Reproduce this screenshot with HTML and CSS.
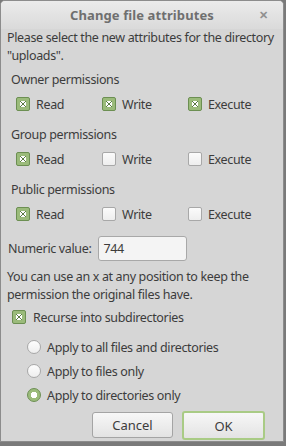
FILE: index.html
```html
<!DOCTYPE html>
<html lang="en">
<head>
    <meta charset="UTF-8">
    <title>Change file attributes</title>
    <link rel="stylesheet" href="styles.css">
</head>
<body>
    <div class="window">
        <div class="titlebar">
            <span class="title">Change file attributes</span>
            <span class="close">&#x2715;</span>
        </div>

        <div class="content">
            <p class="intro">Please select the new attributes for the directory "uploads".</p>

            <div class="group first">
                <div class="group-label">Owner permissions</div>
                <div class="perm-row">
                    <label class="check"><span class="box checked"></span>Read</label>
                    <label class="check"><span class="box checked"></span>Write</label>
                    <label class="check"><span class="box checked"></span>Execute</label>
                </div>
            </div>

            <div class="group">
                <div class="group-label">Group permissions</div>
                <div class="perm-row">
                    <label class="check"><span class="box checked"></span>Read</label>
                    <label class="check"><span class="box"></span>Write</label>
                    <label class="check"><span class="box"></span>Execute</label>
                </div>
            </div>

            <div class="group">
                <div class="group-label">Public permissions</div>
                <div class="perm-row">
                    <label class="check"><span class="box checked"></span>Read</label>
                    <label class="check"><span class="box"></span>Write</label>
                    <label class="check"><span class="box"></span>Execute</label>
                </div>
            </div>

            <div class="numeric">
                <span>Numeric value:</span>
                <span class="field">744</span>
            </div>

            <p class="hint">You can use an x at any position to keep the permission the original files have.</p>

            <label class="check recurse"><span class="box checked"></span>Recurse into subdirectories</label>

            <div class="radios">
                <label class="radio"><span class="dot"></span>Apply to all files and directories</label>
                <label class="radio"><span class="dot"></span>Apply to files only</label>
                <label class="radio"><span class="dot selected"></span>Apply to directories only</label>
            </div>

            <div class="buttons">
                <button class="btn">Cancel</button>
                <button class="btn default">OK</button>
            </div>
        </div>
    </div>
</body>
</html>
```

FILE: styles.css
```css
* {
    margin: 0;
    padding: 0;
    box-sizing: border-box;
}

body {
    width: 286px;
    height: 446px;
    background: #7a7a7a;
    font-family: 'Noto Sans', 'Open Sans', sans-serif;
    font-size: 12.5px;
    letter-spacing: -0.35px;
    color: #3c3c3c;
    overflow: hidden;
}

.window {
    width: 284px;
    height: 442px;
    background: #d6d6d6;
    border: 1px solid #8c8c8c;
    border-radius: 5px 5px 0 0;
    overflow: hidden;
}

.titlebar {
    height: 28px;
    background: linear-gradient(#ebebeb, #dadada);
    display: flex;
    align-items: center;
    justify-content: center;
    position: relative;
}

.title {
    font-weight: bold;
    color: #6f6f6f;
    font-size: 13px;
    letter-spacing: 0.1px;
}

.close {
    position: absolute;
    right: 15px;
    top: 6px;
    font-size: 11px;
    font-weight: bold;
    color: #909090;
}

.content {
    padding: 0 2px 0 6px;
}

.intro {
    line-height: 18px;
}

.group {
    margin-top: 12px;
}

.group.first {
    margin-top: 6px;
}

.group-label {
    padding-left: 4px;
    line-height: 18px;
}

.perm-row {
    display: grid;
    grid-template-columns: 86px 86px auto;
    padding-left: 9px;
    margin-top: 5px;
    height: 20px;
    align-items: center;
}

.check {
    display: flex;
    align-items: center;
    gap: 6px;
}

.box {
    width: 14px;
    height: 14px;
    border: 1px solid #a8a8a8;
    border-radius: 2px;
    background: linear-gradient(#fbfbfb, #eeeeee);
    display: flex;
    align-items: center;
    justify-content: center;
}

.box.checked {
    background: #9bbb7b;
    border-color: #6c8f52;
}

.box.checked::after {
    content: '';
    width: 6px;
    height: 6px;
    background:
        linear-gradient(45deg, transparent 42%, #5a7a44 42%, #5a7a44 58%, transparent 58%),
        linear-gradient(-45deg, transparent 42%, #5a7a44 42%, #5a7a44 58%, transparent 58%),
        #ffffff;
}

.numeric {
    display: flex;
    align-items: center;
    gap: 7px;
    margin-top: 12px;
    padding-left: 1px;
}

.field {
    width: 89px;
    height: 25px;
    border: 1px solid #a8a8a8;
    border-radius: 3px;
    background: #f4f4f4;
    padding-left: 4px;
    line-height: 23px;
}

.hint {
    margin-top: 7px;
    line-height: 18px;
}

.recurse {
    margin-top: 3px;
    padding-left: 5px;
    gap: 7px;
    height: 20px;
}

.radios {
    display: flex;
    flex-direction: column;
    gap: 4px;
    margin-top: 10px;
    padding-left: 20px;
}

.radio {
    display: flex;
    align-items: center;
    gap: 6px;
    height: 20px;
}

.dot {
    width: 14px;
    height: 14px;
    border-radius: 50%;
    border: 1px solid #a8a8a8;
    background: linear-gradient(#fdfdfd, #eeeeee);
}

.dot.selected {
    border: 1px solid #6c8f52;
    background: radial-gradient(circle, #ffffff 0 3px, #9bbb7b 3.5px);
}

.buttons {
    display: flex;
    justify-content: flex-end;
    gap: 9px;
    margin-top: 7px;
    padding-right: 16px;
}

.btn {
    font-family: 'Noto Sans', 'Open Sans', sans-serif;
    font-size: 13px;
    color: #3c3c3c;
    width: 81px;
    height: 26px;
    border: 1px solid #a4a4a4;
    border-radius: 3px;
    background: linear-gradient(#f7f7f7, #e3e3e3);
}

.btn.default {
    width: 83px;
    height: 29px;
    margin-top: -1px;
    border: 2px solid #a9cb85;
}
```
